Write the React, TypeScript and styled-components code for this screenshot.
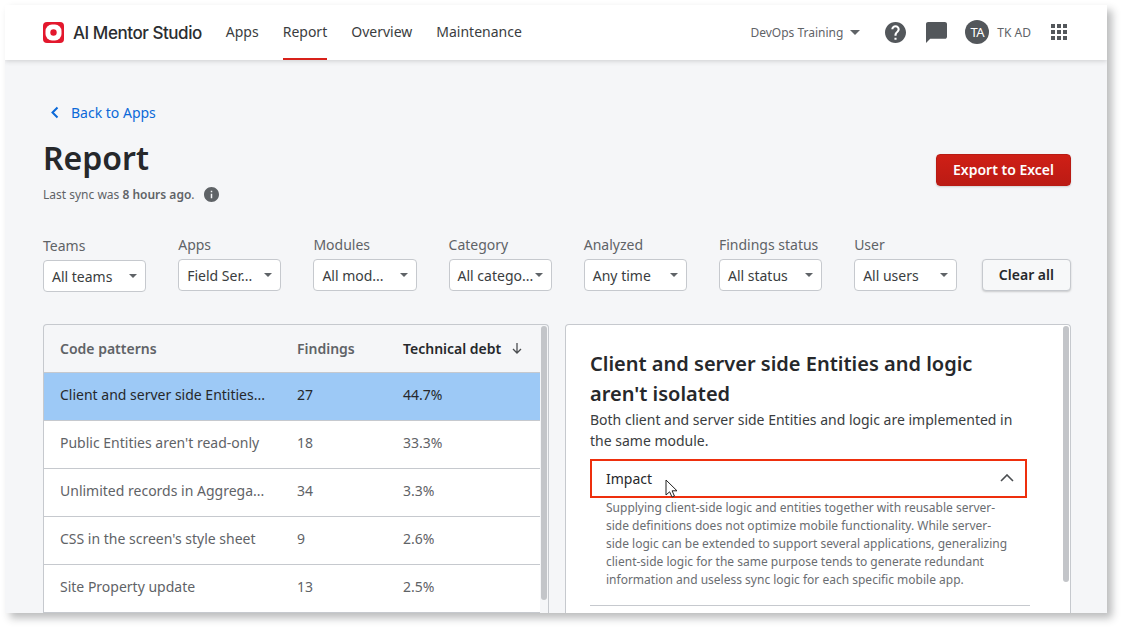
import React from "react";
import styled, { createGlobalStyle } from "styled-components";

const Global = createGlobalStyle`
  html, body { margin: 0; padding: 0; background: #fff; }
  body { font-family: "Noto Sans", "Open Sans", sans-serif; color: #26282b; }
  * { box-sizing: border-box; }
  #root { width: 1122px; height: 628px; padding: 5px 0 0 5px; overflow: hidden; }
`;

const Frame = styled.div`
  position: relative;
  width: 1102px;
  height: 608px;
  background: #f5f6f8;
  overflow: hidden;
  box-shadow: 5px 5px 8px rgba(40, 42, 46, 0.32);
`;
const TopBar = styled.header`
  display: flex;
  align-items: center;
  height: 55px;
  padding: 0 40px 0 38px;
  background: #fff;
  box-shadow: 0 1px 5px rgba(40, 42, 46, 0.2);
  position: relative;
`;
const Brand = styled.div`
  display: flex;
  align-items: center;
  gap: 9px;
  margin-right: 24px;
  font-family: Inter, sans-serif;
  font-size: 17px;
  font-weight: 500;
  letter-spacing: -0.45px;
  color: #2b2d30;
`;
const Nav = styled.nav`
  display: flex;
  gap: 24px;
  height: 100%;
`;
const NavItem = styled.a<{ $active?: boolean }>`
  display: flex;
  align-items: center;
  height: 100%;
  font-size: 14px;
  color: #3a3d40;
  border-bottom: 2px solid ${(p) => (p.$active ? "#d8211a" : "transparent")};
`;
const TopRight = styled.div`
  margin-left: auto;
  display: flex;
  align-items: center;
  padding-bottom: 1px;
`;
const Env = styled.div`
  display: flex;
  align-items: center;
  gap: 7px;
  font-size: 12px;
  color: #5f6367;
  margin-right: 25px;
`;
const Avatar = styled.div`
  width: 24px;
  height: 24px;
  border-radius: 50%;
  background: #53575b;
  color: #fff;
  font-size: 13px;
  letter-spacing: -0.5px;
  display: flex;
  align-items: center;
  justify-content: center;
  margin-right: 8px;
`;
const UserName = styled.span`
  font-size: 12px;
  color: #5f6367;
  margin-right: 20px;
`;
const IconSlot = styled.span<{ $gap: number }>`
  display: flex;
  margin-right: ${(p) => p.$gap}px;
`;
const Content = styled.main`
  padding: 0 36px 0 38px;
`;
const Back = styled.a`
  display: flex;
  align-items: center;
  gap: 12px;
  height: 20px;
  margin-top: 42px;
  font-size: 14px;
  color: #0b69d8;
  svg { margin-left: 7px; }
`;
const TitleRow = styled.div`
  display: flex;
  justify-content: space-between;
  align-items: flex-start;
  margin-top: 14px;
`;
const H1 = styled.h1`
  margin: 0;
  font-size: 32px;
  line-height: 44px;
  font-weight: 600;
  color: #26282b;
`;
const Sync = styled.div`
  display: flex;
  align-items: center;
  gap: 9px;
  margin-top: 5px;
  height: 18px;
  font-size: 12px;
  color: #5f6367;
  b { font-weight: 600; }
`;
const Primary = styled.button`
  width: 135px;
  height: 32px;
  margin-top: 18px;
  border: 1px solid #b81b14;
  border-radius: 4px;
  background: linear-gradient(#cf1f16, #bb1b14);
  color: #fff;
  font: 600 14px "Noto Sans", sans-serif;
  padding: 0 0 2px;
  box-shadow: 0 1px 2px rgba(0, 0, 0, 0.15);
`;
const Filters = styled.div`
  display: flex;
  align-items: flex-end;
  gap: 32px;
  margin-top: 33px;
  height: 55px;
`;
const Filter = styled.label<{ $drop?: boolean }>`
  display: flex;
  flex: none;
  flex-direction: column;
  width: 103.2px;
  margin-bottom: ${(p) => (p.$drop ? "-1px" : "0")};
  font-size: 14px;
  line-height: 20px;
  color: #5f6367;
`;
const Select = styled.div`
  display: flex;
  align-items: center;
  justify-content: space-between;
  height: 32px;
  margin-top: 4px;
  padding: 0 8px;
  background: #fff;
  border: 1px solid #c6c9ce;
  border-radius: 4px;
  color: #3a3d40;
  line-height: 28px;
  white-space: nowrap;
`;
const SelectValue = styled.span`
  padding-top: 2px;
`;
const Caret = styled.i`
  flex: none;
  width: 0;
  height: 0;
  border-left: 4px solid transparent;
  border-right: 4px solid transparent;
  border-top: 4px solid #5f6367;
`;
const Clear = styled.button`
  flex: none;
  width: 89px;
  height: 32px;
  margin-left: -7.4px;
  background: #f7f8f9;
  border: 1px solid #c6c9ce;
  border-radius: 4px;
  color: #26282b;
  font: 600 14px "Noto Sans", sans-serif;
  padding: 0 0 2px;
  box-shadow: 0 1px 2px rgba(0, 0, 0, 0.18);
`;
const Panels = styled.div`
  display: flex;
  gap: 16px;
  margin-top: 33px;
`;
const Panel = styled.section<{ $white?: boolean }>`
  position: relative;
  width: 506px;
  height: 320px;
  background: ${(p) => (p.$white ? "#fff" : "#f5f6f8")};
  border: 1px solid #c6c9ce;
  border-bottom: 0;
  border-radius: 4px 4px 0 0;
  overflow: hidden;
`;
const Thumb = styled.div<{ $h: number }>`
  position: absolute;
  top: 1px;
  right: 1px;
  width: 6px;
  height: ${(p) => p.$h}px;
  border-radius: 3px;
  background: #c3c5c9;
`;
const Table = styled.div`
  width: 496px;
`;
const Row = styled.div<{ $kind?: "head" | "sel" }>`
  display: grid;
  grid-template-columns: 237px 106px 1fr;
  align-items: center;
  height: 48px;
  padding: 0 0 ${(p) => (p.$kind === "head" ? "0" : "4px")} 16px;
  background: ${(p) => (p.$kind === "head" ? "transparent" : p.$kind === "sel" ? "#9dc9f6" : "#fff")};
  border-bottom: 1px solid #c6c9ce;
  font-size: 14px;
  color: ${(p) => (p.$kind === "sel" ? "#26282b" : "#5f6367")};
  font-weight: ${(p) => (p.$kind === "head" ? 600 : 400)};
`;
const Cell = styled.span`
  white-space: nowrap;
`;
const Sorted = styled.span`
  display: flex;
  align-items: center;
  gap: 11px;
  color: #26282b;
`;
const Detail = styled.div`
  padding: 24px 40px 0 24px;
`;
const H2 = styled.h2`
  margin: 0;
  font-size: 20px;
  line-height: 30px;
  font-weight: 600;
  color: #26282b;
`;
const Desc = styled.p`
  margin: 0;
  font-size: 14px;
  line-height: 21px;
  color: #3a3d40;
`;
const AccHead = styled.div`
  display: flex;
  align-items: center;
  justify-content: space-between;
  width: 437px;
  height: 39px;
  margin-top: 8px;
  padding: 0 11px 1px 14px;
  border: 2px solid #ee2f0d;
  font-size: 14px;
  color: #26282b;
`;
const AccBody = styled.p`
  margin: 1px 0 0;
  padding: 0 16px;
  width: 437px;
  font-size: 12px;
  line-height: 18px;
  color: #6a6d71;
`;
const Divider = styled.hr`
  margin: 16px 0 0;
  width: 440px;
  border: 0;
  border-top: 1px solid #c6c9ce;
`;
const Cursor = styled.svg`
  position: absolute;
  left: 660px;
  top: 474px;
`;

const rows = [
  ["Client and server side Entities...", "27", "44.7%"],
  ["Public Entities aren't read-only", "18", "33.3%"],
  ["Unlimited records in Aggrega...", "34", "3.3%"],
  ["CSS in the screen's style sheet", "9", "2.6%"],
  ["Site Property update", "13", "2.5%"],
];
const filters: [string, string, boolean?][] = [
  ["Teams", "All teams", true],
  ["Apps", "Field Ser..."],
  ["Modules", "All mod..."],
  ["Category", "All catego..."],
  ["Analyzed", "Any time"],
  ["Findings status", "All status"],
  ["User", "All users"],
];

export default function App() {
  return (
    <>
      <Global />
      <Frame>
        <TopBar>
          <Brand>
            <svg width="21" height="21" viewBox="0 0 21 21">
              <rect width="21" height="21" rx="4" fill="#e3182d" />
              <rect x="2.5" y="2.5" width="16" height="16" rx="6.5" fill="#fff" />
              <circle cx="10.5" cy="10.5" r="3.2" fill="#e3182d" />
            </svg>
            AI Mentor Studio
          </Brand>
          <Nav>
            <NavItem>Apps</NavItem>
            <NavItem $active>Report</NavItem>
            <NavItem>Overview</NavItem>
            <NavItem>Maintenance</NavItem>
          </Nav>
          <TopRight>
            <Env>
              DevOps Training
              <svg width="10" height="5" viewBox="0 0 10 5"><path d="M0 0h10L5 5z" fill="#5f6367" /></svg>
            </Env>
            <IconSlot $gap={20}>
              <svg width="21" height="21" viewBox="2 2 20 20" fill="#53575b">
                <path d="M12 2C6.48 2 2 6.48 2 12s4.48 10 10 10 10-4.48 10-10S17.52 2 12 2zm1 17h-2v-2h2v2zm2.07-7.75l-.9.92C13.45 12.9 13 13.5 13 15h-2v-.5c0-1.1.45-2.1 1.17-2.83l1.24-1.26c.37-.36.59-.86.59-1.41 0-1.1-.9-2-2-2s-2 .9-2 2H8c0-2.21 1.79-4 4-4s4 1.79 4 4c0 .88-.36 1.68-.93 2.25z" />
              </svg>
            </IconSlot>
            <IconSlot $gap={18}>
              <svg width="21" height="21" viewBox="2 2 20 20" fill="#53575b">
                <path d="M20 2H4c-1.1 0-2 .9-2 2v18l4-4h14c1.1 0 2-.9 2-2V4c0-1.1-.9-2-2-2z" />
              </svg>
            </IconSlot>
            <Avatar>TA</Avatar>
            <UserName>TK AD</UserName>
            <svg width="16" height="16" viewBox="0 0 16 16" fill="#53575b">
              {[0, 6, 12].flatMap((y) =>
                [0, 6, 12].map((x) => <rect key={`${x}-${y}`} x={x} y={y} width="4" height="4" />)
              )}
            </svg>
          </TopRight>
        </TopBar>
        <Content>
          <Back>
            <svg width="9" height="13" viewBox="0 0 9 13">
              <path d="M7.5 1.5 2.5 6.5l5 5" fill="none" stroke="#0b69d8" strokeWidth="2" />
            </svg>
            Back to Apps
          </Back>
          <TitleRow>
            <div>
              <H1>Report</H1>
              <Sync>
                <span>Last sync was <b>8 hours ago</b>.</span>
                <svg width="15" height="15" viewBox="2 2 20 20" fill="#5f6367">
                  <path d="M12 2C6.48 2 2 6.48 2 12s4.48 10 10 10 10-4.48 10-10S17.52 2 12 2zm1 15h-2v-6h2v6zm0-8h-2V7h2v2z" />
                </svg>
              </Sync>
            </div>
            <Primary>Export to Excel</Primary>
          </TitleRow>
          <Filters>
            {filters.map(([label, value, drop]) => (
              <Filter key={label} $drop={drop}>
                {label}
                <Select>
                  <SelectValue>{value}</SelectValue>
                  <Caret />
                </Select>
              </Filter>
            ))}
            <Clear>Clear all</Clear>
          </Filters>
          <Panels>
            <Panel>
              <Table>
                <Row $kind="head">
                  <Cell>Code patterns</Cell>
                  <Cell>Findings</Cell>
                  <Sorted>
                    Technical debt
                    <svg width="10" height="11" viewBox="0 0 10 11">
                      <path d="M5 0v10M1 6l4 4 4-4" fill="none" stroke="#4a4d50" strokeWidth="1.3" />
                    </svg>
                  </Sorted>
                </Row>
                {rows.map((r, i) => (
                  <Row key={r[0]} $kind={i === 0 ? "sel" : undefined}>
                    <Cell>{r[0]}</Cell>
                    <Cell>{r[1]}</Cell>
                    <Cell>{r[2]}</Cell>
                  </Row>
                ))}
              </Table>
              <Thumb $h={274} />
            </Panel>
            <Panel $white>
              <Detail>
                <H2>Client and server side Entities and logic aren't isolated</H2>
                <Desc>Both client and server side Entities and logic are implemented in the same module.</Desc>
                <AccHead>
                  Impact
                  <svg width="14" height="8" viewBox="0 0 14 8">
                    <path d="M1 7l6-6 6 6" fill="none" stroke="#4a4d50" strokeWidth="1.6" />
                  </svg>
                </AccHead>
                <AccBody>
                  Supplying client-side logic and entities together with reusable server-side definitions does not optimize mobile functionality. While server-side logic can be extended to support several applications, generalizing client-side logic for the same purpose tends to generate redundant information and useless sync logic for each specific mobile app.
                </AccBody>
                <Divider />
              </Detail>
              <Thumb $h={256} />
            </Panel>
          </Panels>
        </Content>
        <Cursor width="14" height="20" viewBox="0 0 14 20">
          <path d="M1 1v15l3.6-3.2L7 18l2.4-1-2.3-5.2H12z" fill="#fff" stroke="#222" strokeWidth="1" />
        </Cursor>
      </Frame>
    </>
  );
}
